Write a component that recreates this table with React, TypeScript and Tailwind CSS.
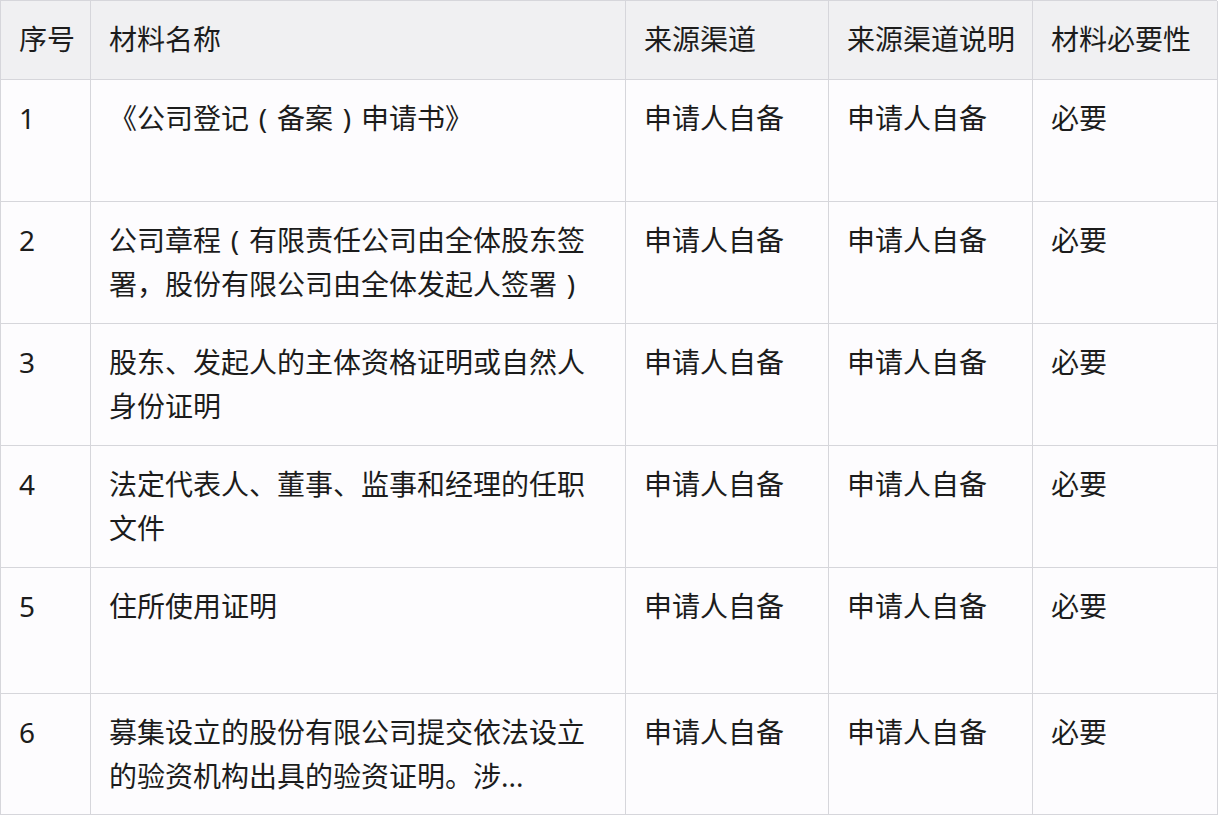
import React from "react";

const P = ({ c }: { c: string }) => (
  <span className="inline-block w-[28px] text-center">{c}</span>
);

const rows: { n: string; name: React.ReactNode[]; h: string }[] = [
  { n: "1", name: [<>《公司登记<P c="(" />备案<P c=")" />申请书》</>], h: "h-[122px]" },
  {
    n: "2",
    name: [<>公司章程<P c="(" />有限责任公司由全体股东签</>, <>署，股份有限公司由全体发起人签署<P c=")" /></>],
    h: "h-[122px]",
  },
  { n: "3", name: ["股东、发起人的主体资格证明或自然人", "身份证明"], h: "h-[122px]" },
  { n: "4", name: ["法定代表人、董事、监事和经理的任职", "文件"], h: "h-[122px]" },
  { n: "5", name: ["住所使用证明"], h: "h-[126px]" },
  { n: "6", name: ["募集设立的股份有限公司提交依法设立", "的验资机构出具的验资证明。涉..."], h: "h-[121px]" },
];

const cell = "border-r border-b border-[#d6d6db] pl-[18px] pt-[16px] leading-[44px] whitespace-nowrap overflow-hidden";

export default function App() {
  return (
    <div
      lang="zh-CN"
      className="w-[1220px] h-[816px] bg-white text-[28px] text-[#1c1c1c]"
      style={{ fontFamily: '"Noto Sans", "Noto Sans CJK SC", sans-serif' }}
    >
      <div className="grid grid-cols-[90px_535px_203px_204px_185px] border-l border-t border-[#d6d6db] w-[1217px]">
        <div className={`${cell} h-[79px] bg-[#f0f0f2]`}>序号</div>
        <div className={`${cell} h-[79px] bg-[#f0f0f2]`}>材料名称</div>
        <div className={`${cell} h-[79px] bg-[#f0f0f2]`}>来源渠道</div>
        <div className={`${cell} h-[79px] bg-[#f0f0f2]`}>来源渠道说明</div>
        <div className={`${cell} h-[79px] bg-[#f0f0f2]`}>材料必要性</div>
        {rows.map((r) => (
          <React.Fragment key={r.n}>
            <div className={`${cell} ${r.h} bg-[#fdfcfe]`}>{r.n}</div>
            <div className={`${cell} ${r.h} bg-[#fdfcfe]`}>
              {r.name.map((l, i) => (
                <div key={i}>{l}</div>
              ))}
            </div>
            <div className={`${cell} ${r.h} bg-[#fdfcfe]`}>申请人自备</div>
            <div className={`${cell} ${r.h} bg-[#fdfcfe]`}>申请人自备</div>
            <div className={`${cell} ${r.h} bg-[#fdfcfe]`}>必要</div>
          </React.Fragment>
        ))}
      </div>
    </div>
  );
}
